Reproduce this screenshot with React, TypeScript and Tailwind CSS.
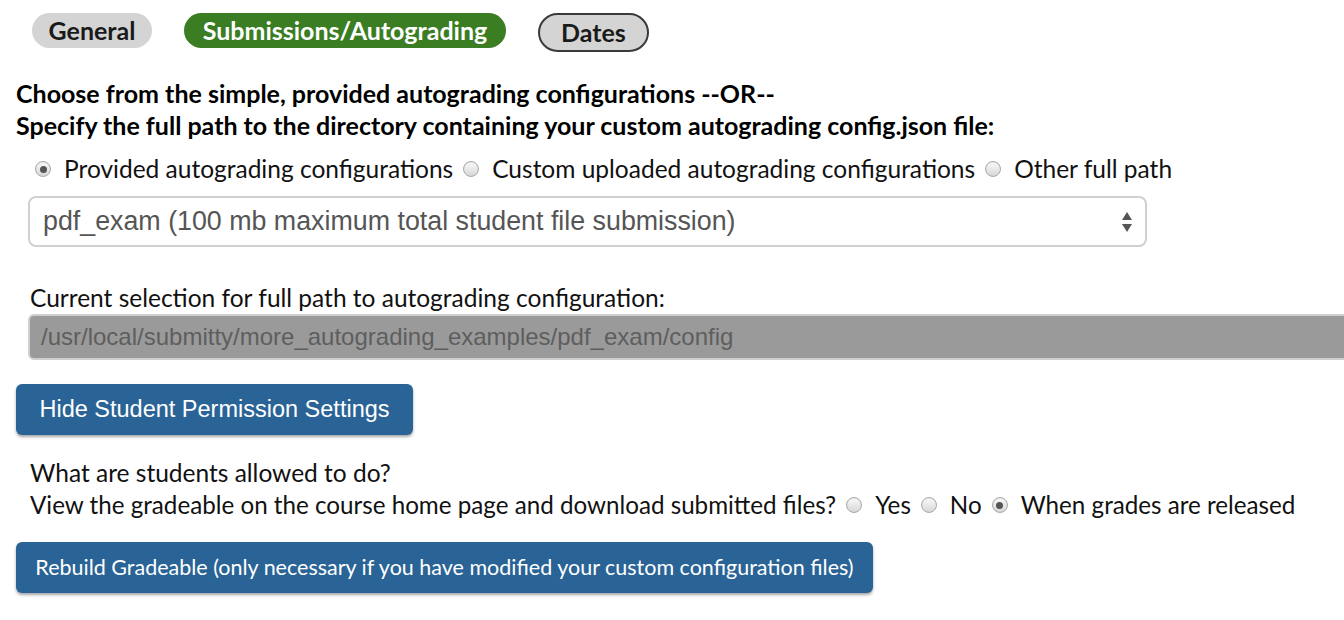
import React from "react"

const sans = "font-['Lato','Liberation_Sans',sans-serif]"
const helv = "font-['Liberation_Sans','Arial',sans-serif]"

function Radio({ checked }: { checked?: boolean }) {
  return (
    <span className="inline-flex h-[16px] w-[16px] shrink-0 items-center justify-center rounded-full border border-[#a9a9a9] bg-gradient-to-b from-[#fbfbfb] to-[#d6d6d6] shadow-[inset_0_1px_1px_rgba(0,0,0,0.08)]">
      {checked && <span className="h-[7px] w-[7px] rounded-full bg-[#555]" />}
    </span>
  )
}

function Option({ label, checked, gap = "gap-[13px]" }: { label: string; checked?: boolean; gap?: string }) {
  return (
    <label className={`inline-flex items-center ${gap}`}>
      <Radio checked={checked} />
      <span>{label}</span>
    </label>
  )
}

export default function App() {
  return (
    <div className={`min-h-[620px] w-[1344px] overflow-hidden bg-white text-[24.5px] text-[#111] ${sans}`}>
      {/* Tabs */}
      <div className="flex items-start gap-[32px] pl-[32px] pt-[13px] text-[25px]">
        <div className="flex h-[35px] w-[120px] items-center justify-center rounded-full bg-[#d4d4d4] font-bold text-[#1a1a1a]">
          General
        </div>
        <div className="flex h-[35px] w-[322px] items-center justify-center rounded-full bg-[#3a7d22] font-bold text-white">
          Submissions/Autograding
        </div>
        <div className="flex h-[39px] w-[111px] items-center justify-center rounded-full border-2 border-[#3a3a3a] bg-[#d4d4d4] font-bold text-[#1a1a1a]">
          Dates
        </div>
      </div>

      {/* Heading */}
      <div className="mt-[25px] pl-[16px] text-[25px] font-bold leading-[32px] text-black">
        <div>Choose from the simple, provided autograding configurations --OR--</div>
        <div>Specify the full path to the directory containing your custom autograding config.json file:</div>
      </div>

      {/* Config type */}
      <div className="mt-[12px] flex h-[32px] items-center gap-[10px] pl-[35px]">
        <Option label="Provided autograding configurations" checked />
        <Option label="Custom uploaded autograding configurations" />
        <Option label="Other full path" />
      </div>

      <div className="mt-[11px] pl-[28px]">
        <div className={`flex h-[51px] w-[1119px] items-center justify-between rounded-[8px] border-2 border-[#d0d0d0] pl-[13px] pr-[12px] text-[26.8px] text-[#555] ${helv}`}>
          <span>pdf_exam (100 mb maximum total student file submission)</span>
          <svg width="12" height="24" viewBox="0 0 12 24">
            <path d="M6 2 L11 10 L1 10 Z" fill="#555" />
            <path d="M1 14 L11 14 L6 22 Z" fill="#555" />
          </svg>
        </div>
      </div>

      {/* Current path */}
      <div className="mt-[35px] pl-[30px] leading-[32px]">Current selection for full path to autograding configuration:</div>
      <div className="pl-[28px]">
        <div className={`flex h-[46px] w-[1330px] items-center rounded-[6px] border-2 border-[#cfcfcf] bg-[#9a9a9a] pl-[11px] text-[24px] text-[#5e5e5e] ${helv}`}>
          /usr/local/submitty/more_autograding_examples/pdf_exam/config
        </div>
      </div>

      {/* Permission toggle */}
      <div className="mt-[24px] pl-[16px]">
        <button className={`h-[51px] w-[397px] rounded-[6px] bg-[#2a6496] text-[23.5px] text-white shadow-[0_2px_3px_rgba(0,0,0,0.35)] ${helv}`}>
          Hide Student Permission Settings
        </button>
      </div>

      <div className="mt-[22px] pl-[30px] leading-[32px]">
        <div>What are students allowed to do?</div>
        <div className="flex items-center gap-[10px] text-[24.2px]">
          <span>View the gradeable on the course home page and download submitted files?</span>
          <Option label="Yes" gap="gap-[13px]" />
          <Option label="No" gap="gap-[13px]" />
          <Option label="When grades are released" checked gap="gap-[13px]" />
        </div>
      </div>

      <div className="mt-[21px] pl-[16px]">
        <button className="h-[51px] w-[857px] rounded-[6px] bg-[#2a6496] text-[21.5px] text-white shadow-[0_2px_3px_rgba(0,0,0,0.35)]">
          Rebuild Gradeable (only necessary if you have modified your custom configuration files)
        </button>
      </div>
    </div>
  )
}
